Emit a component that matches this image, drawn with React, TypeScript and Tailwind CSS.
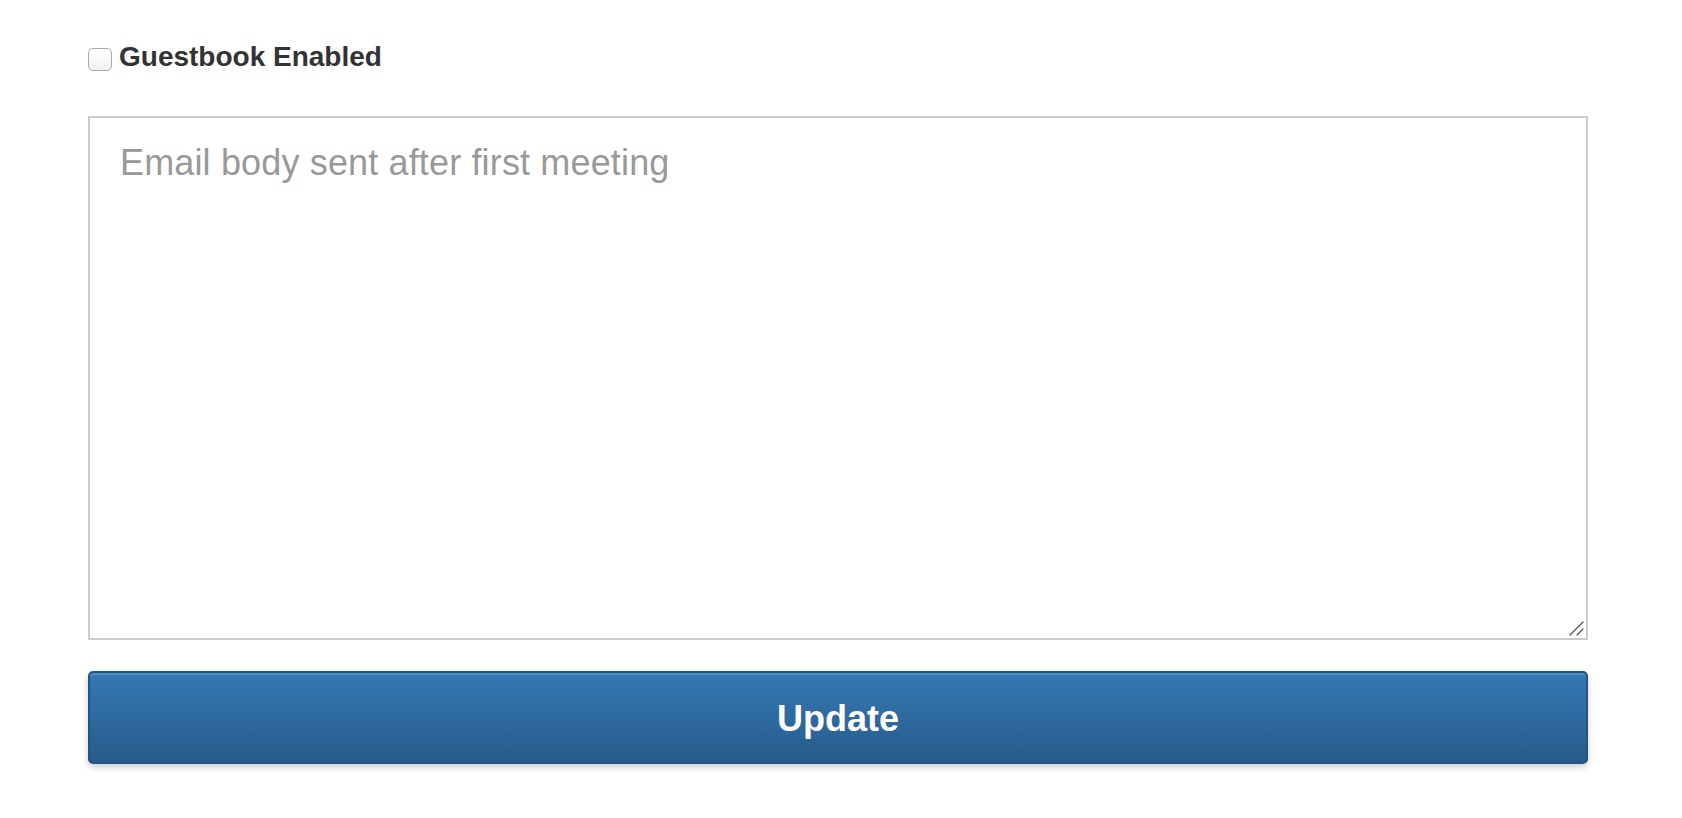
import React from "react";

export default function App() {
  return (
    <div className="min-h-screen bg-white font-['Liberation_Sans',Arial,sans-serif] text-[#333]">
      <form className="ml-[88px] w-[1500px] pt-[37px]">
        <label className="flex items-start gap-[7px] cursor-pointer">
          <input
            type="checkbox"
            className="mt-[11px] h-[23px] w-[24px] appearance-none rounded-[5px] border-[1.5px] border-[#a9a9a9] bg-gradient-to-b from-white to-[#f3f3f3]"
          />
          <span className="text-[28px] font-bold leading-[40px]">Guestbook Enabled</span>
        </label>

        <div className="relative mt-[39px]">
          <textarea
            placeholder="Email body sent after first meeting"
            className="block h-[524px] w-full resize-none border-2 border-[#cccccc] bg-white pt-[19px] pl-[30px] pr-[30px] text-[36px] leading-[51px] tracking-[0.15px] text-[#555] placeholder:text-[#999] outline-none"
          />
          {/* resize grip */}
          <svg
            className="pointer-events-none absolute bottom-[4px] right-[4px]"
            width="16"
            height="16"
            viewBox="0 0 16 16"
          >
            <path d="M15 2 L2 15" stroke="#555" strokeWidth="1.3" strokeLinecap="round" />
            <path d="M15 9 L9 15" stroke="#555" strokeWidth="1.3" strokeLinecap="round" />
          </svg>
        </div>

        <button
          type="button"
          className="mt-[31px] block h-[93px] w-full rounded-[5px] border-2 border-[#245580] bg-gradient-to-b from-[#3479b6] to-[#275b8a] pt-[2px] text-[36px] font-bold text-white shadow-[inset_0_2px_0_rgba(255,255,255,0.15),0_3px_6px_rgba(0,0,0,0.2)]"
        >
          Update
        </button>
      </form>
    </div>
  );
}
